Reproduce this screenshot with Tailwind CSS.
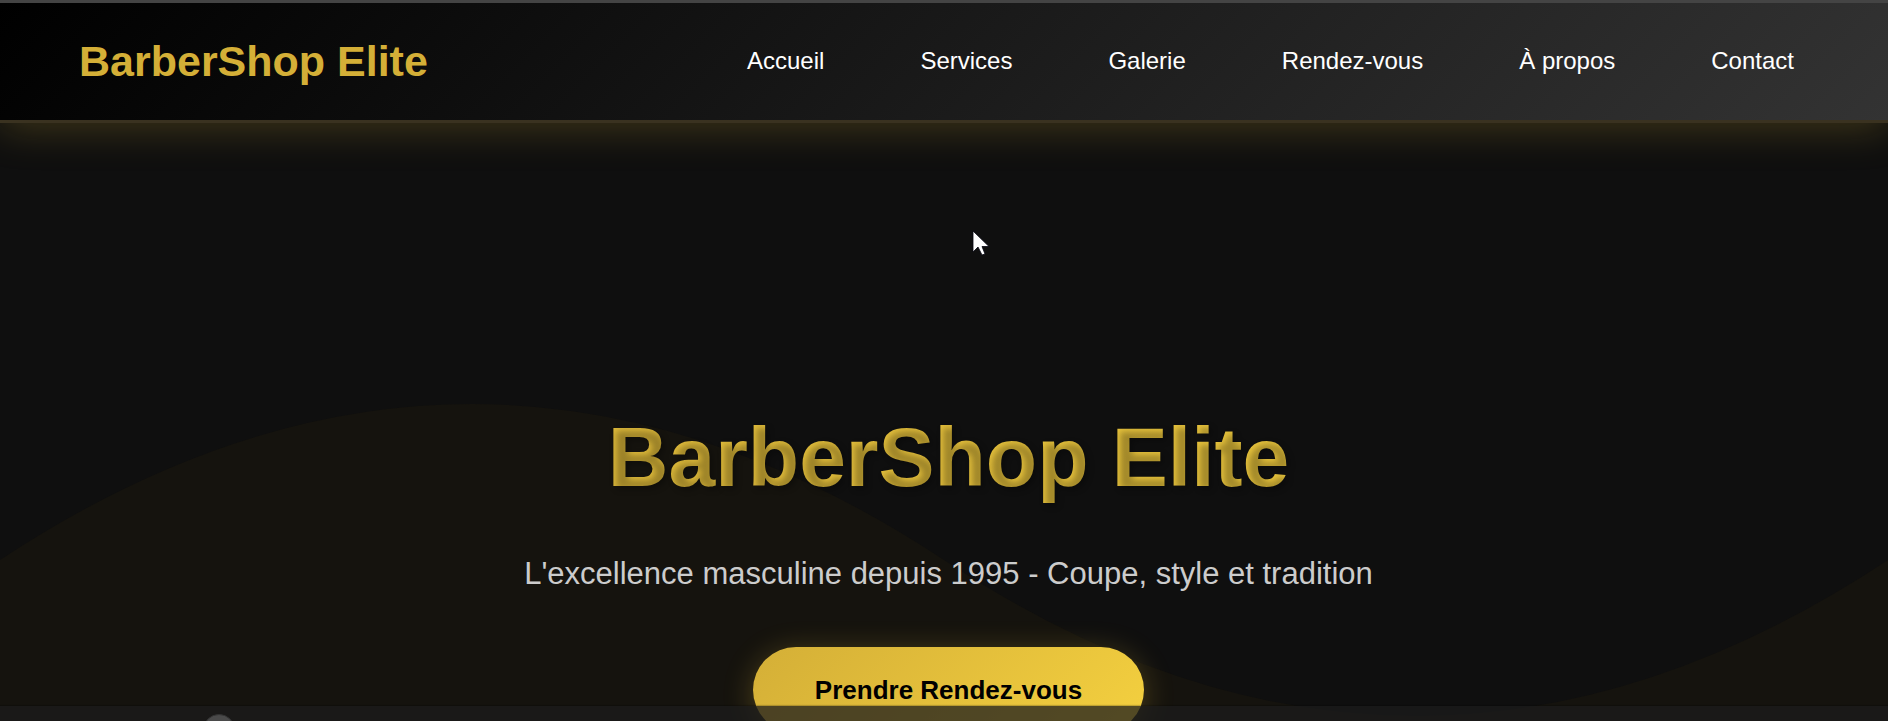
<!DOCTYPE html>
<html lang="fr">
<head>
<meta charset="utf-8">
<meta name="viewport" content="width=device-width, initial-scale=1">
<title>BarberShop Elite</title>
<script src="https://cdn.jsdelivr.net/npm/@tailwindcss/browser@4"></script>
</head>
<body class="bg-[#0f0f0f] font-['Liberation_Sans',Arial,sans-serif] text-white">
<div class="relative flex h-screen flex-col overflow-hidden border-t-3 border-[#444444]">
  <header class="relative z-10 flex shrink-0 items-center justify-between border-b-3 border-[#3a3220] bg-[linear-gradient(135deg,#000000,#333333)] px-[79px] shadow-[0_5px_40px_rgba(212,175,55,0.25)]">
    <a href="#accueil" class="py-8 text-[43px] leading-[53px] font-bold text-[#d4af37]">BarberShop Elite</a>
    <nav class="flex gap-16 pb-[2px] text-[24px] leading-8">
      <a href="#accueil" class="px-4">Accueil</a>
      <a href="#services" class="px-4">Services</a>
      <a href="#galerie" class="px-4">Galerie</a>
      <a href="#rendez-vous" class="px-4">Rendez-vous</a>
      <a href="#apropos" class="px-4">À propos</a>
      <a href="#contact" class="pr-[15px] pl-4">Contact</a>
    </nav>
  </header>

  <main id="accueil" class="relative flex flex-1 flex-col items-center pt-[292px] pl-[9px] text-center">
    <svg class="absolute inset-x-0 top-[281px] h-[320px] w-full" viewBox="0 0 1888 320" preserveAspectRatio="none" aria-hidden="true">
      <path d="M0 156 Q472 -156 944 156 T1888 156 V320 H0 Z" fill="#15130e"/>
    </svg>
    <h1 class="relative w-full bg-[linear-gradient(135deg,#d4af37,#f4d03f)] bg-clip-text pb-5 text-[84px] leading-[84px] font-bold text-transparent [text-shadow:3px_3px_6px_rgba(0,0,0,0.3)]">BarberShop Elite</h1>
    <p class="relative mt-[35px] text-[31px] leading-10 text-[#cccccc]">L'excellence masculine depuis 1995 - Coupe, style et tradition</p>
    <button type="button" class="relative mt-[53px] rounded-full bg-[linear-gradient(135deg,#d4af37,#f4d03f)] px-[62px] py-6 text-[26px] leading-[38px] font-bold text-black shadow-[0_5px_30px_rgba(212,175,55,0.3)]">Prendre Rendez-vous</button>
  </main>

  <div class="absolute inset-x-0 bottom-0 z-20 h-[15px] overflow-hidden bg-[#1c1c1c]/75 shadow-[0_-1px_1px_rgba(0,0,0,0.2)]">
    <span class="absolute top-2 left-[203px] size-8 rounded-full border border-[#333333] bg-[#4a4a4a]"></span>
  </div>

  <svg class="absolute top-[227px] left-[972px] z-30 h-7 w-5" viewBox="0 0 20 28" aria-hidden="true">
    <path d="M1 1 V22 L6 17 L10 25 L13 24 L10 16.500 H17 Z" fill="#fff" stroke="#050510" stroke-width=".8"/>
  </svg>
</div>
</body>
</html>
